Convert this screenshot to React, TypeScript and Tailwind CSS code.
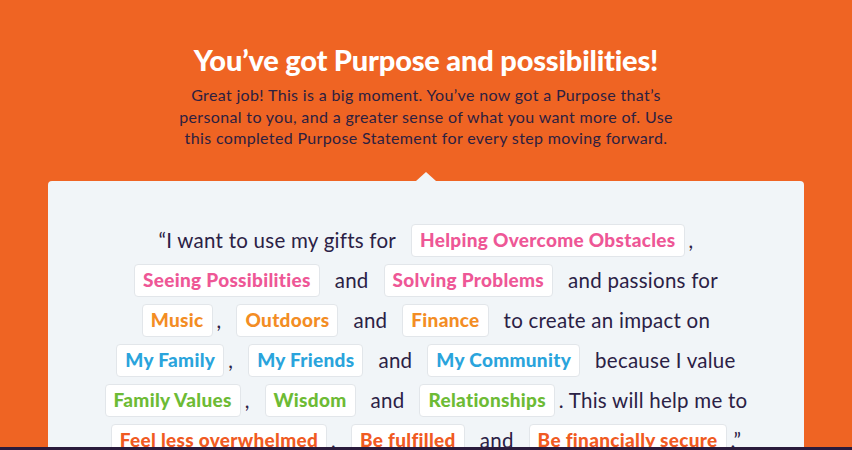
import React from "react";

type Item =
  | { t: "text"; v: string }
  | { t: "comma"; v: string }
  | { t: "chip"; v: string; c: string };

const PINK = "text-[#ee5796]";
const ORANGE = "text-[#f38d24]";
const BLUE = "text-[#2aa4dc]";
const GREEN = "text-[#6dbb35]";
const RED = "text-[#f05a22]";

const rows: Item[][] = [
  [
    { t: "text", v: "“I want to use my gifts for" },
    { t: "chip", v: "Helping Overcome Obstacles", c: PINK },
    { t: "comma", v: "," },
  ],
  [
    { t: "chip", v: "Seeing Possibilities", c: PINK },
    { t: "text", v: "and" },
    { t: "chip", v: "Solving Problems", c: PINK },
    { t: "text", v: "and passions for" },
  ],
  [
    { t: "chip", v: "Music", c: ORANGE },
    { t: "comma", v: "," },
    { t: "chip", v: "Outdoors", c: ORANGE },
    { t: "text", v: "and" },
    { t: "chip", v: "Finance", c: ORANGE },
    { t: "text", v: "to create an impact on" },
  ],
  [
    { t: "chip", v: "My Family", c: BLUE },
    { t: "comma", v: "," },
    { t: "chip", v: "My Friends", c: BLUE },
    { t: "text", v: "and" },
    { t: "chip", v: "My Community", c: BLUE },
    { t: "text", v: "because I value" },
  ],
  [
    { t: "chip", v: "Family Values", c: GREEN },
    { t: "comma", v: "," },
    { t: "chip", v: "Wisdom", c: GREEN },
    { t: "text", v: "and" },
    { t: "chip", v: "Relationships", c: GREEN },
    { t: "comma", v: ". This will help me to" },
  ],
  [
    { t: "chip", v: "Feel less overwhelmed", c: RED },
    { t: "comma", v: "," },
    { t: "chip", v: "Be fulfilled", c: RED },
    { t: "text", v: "and" },
    { t: "chip", v: "Be financially secure", c: RED },
    { t: "comma", v: ".”" },
  ],
];

export default function App() {
  return (
    <div
      className="h-[450px] w-full overflow-hidden bg-[#ef6423] flex flex-col"
      style={{ fontFamily: "Lato, 'Noto Sans', sans-serif" }}
    >
      <div className="flex-1 overflow-hidden flex flex-col items-center">
        <h1 className="mt-[42px] text-[29px] leading-[36px] font-black text-white tracking-[-0.2px]">
          You’ve got Purpose and possibilities!
        </h1>
        <p className="mt-[6px] text-center text-[16px] leading-[21.5px] tracking-[0.35px] text-[#2d2040]">
          Great job! This is a big moment. You’ve now got a Purpose that’s
          <br />
          personal to you, and a greater sense of what you want more of. Use
          <br />
          this completed Purpose Statement for every step moving forward.
        </p>
        <div className="mt-[23px] w-[756px] flex flex-col items-center">
          <div className="w-0 h-0 border-l-[10px] border-r-[10px] border-b-[9px] border-l-transparent border-r-transparent border-b-[#f1f5f8]" />
          <div className="w-full bg-[#f1f5f8] rounded-t-[4px] pt-[43px] flex flex-col items-center gap-[7px] pb-10">
            {rows.map((row, i) => (
              <div key={i} className="flex items-center gap-[15px] h-[33px]">
                {row.map((it, j) =>
                  it.t === "chip" ? (
                    <span
                      key={j}
                      className={`h-[33px] px-[8px] flex items-center bg-white border border-[#e2e6ea] rounded-[4px] text-[19px] tracking-[0.3px] font-black ${it.c}`}
                    >
                      {it.v}
                    </span>
                  ) : (
                    <span
                      key={j}
                      className={`text-[20.5px] tracking-[0.25px] text-[#2b2145] whitespace-pre ${
                        it.t === "comma" ? "-ml-[11px]" : ""
                      }`}
                    >
                      {it.v}
                    </span>
                  )
                )}
              </div>
            ))}
          </div>
        </div>
      </div>
      <div className="h-[3px] bg-[#2a1b3c] shrink-0" />
    </div>
  );
}
